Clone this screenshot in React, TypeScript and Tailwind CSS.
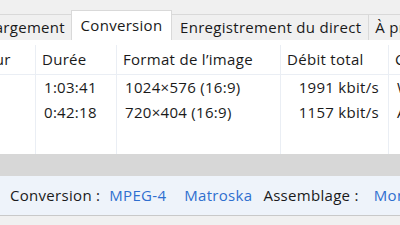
const FONT = { fontFamily: '"Open Sans", "Noto Sans", sans-serif' };

const COLS = [
  { w: "w-[36px]", label: "Auteur" },
  { w: "w-[81px]", label: "Durée" },
  { w: "w-[164px]", label: "Format de l’image" },
  { w: "w-[108px]", label: "Débit total" },
  { w: "w-[60px]", label: "Codec" },
];

const ROWS = [
  ["", "1:03:41", "1024×576 (16:9)", "1991 kbit/s", "WMV"],
  ["", "0:42:18", "720×404 (16:9)", "1157 kbit/s", "AVC"],
];

export default function App() {
  return (
    <div className="w-[400px] h-[225px] overflow-hidden bg-[#f0f0f0] text-[15px] tracking-[0.3px] text-[#1a1a1a]" style={FONT}>
      {/* Tabs */}
      <div className="h-[40px] flex items-end">
        <div className="w-[72px] h-[26px] shrink-0 flex items-center justify-end pr-[6px] overflow-hidden border-t border-r border-[#d9d9d9] whitespace-nowrap">
          Téléchargement
        </div>
        <div className="w-[101px] h-[30px] shrink-0 flex items-center justify-center bg-white border-t border-x border-[#d9d9d9] -mx-px relative z-10 whitespace-nowrap">
          Conversion
        </div>
        <div className="h-[26px] shrink-0 flex items-center pl-[9px] pr-[7px] border-t border-r border-[#d9d9d9] whitespace-nowrap">
          Enregistrement du direct
        </div>
        <div className="h-[26px] shrink-0 flex items-center px-[6px] border-t border-[#d9d9d9] whitespace-nowrap">
          À propos
        </div>
      </div>

      {/* Table */}
      <div className="h-[114px] bg-white pt-[5px] flex">
        {COLS.map((c, ci) => (
          <div key={ci} className={`${c.w} shrink-0 border-r border-[#eaeef4] flex flex-col overflow-hidden`}>
            <div className="h-[30px] flex items-center border-b border-[#eaeef4] whitespace-nowrap">
              <span className={ci === 0 ? "-ml-[39px]" : "pl-[6px]"}>{c.label}</span>
            </div>
            {ROWS.map((r, ri) => (
              <div
                key={ri}
                className={`h-[25px] flex items-center whitespace-nowrap ${
                  ci === 3 ? "justify-end pr-[9px]" : "pl-[8px]"
                }`}
              >
                {r[ci]}
              </div>
            ))}
          </div>
        ))}
      </div>

      {/* Scroll area */}
      <div className="h-[22px] bg-[#d7d7d7]" />

      {/* Footer */}
      <div className="h-[40px] bg-[#eef3fa] border-b border-[#c9c9c9] flex items-center pl-[10px] whitespace-nowrap">
        <span>Conversion :</span>
        <span className="ml-[9px] text-[#2f6fcf]">MPEG-4</span>
        <span className="ml-[18px] text-[#2f6fcf]">Matroska</span>
        <span className="ml-[11px]">Assemblage&nbsp;:</span>
        <span className="ml-[15px] text-[#2f6fcf]">Mono</span>
      </div>
    </div>
  );
}
